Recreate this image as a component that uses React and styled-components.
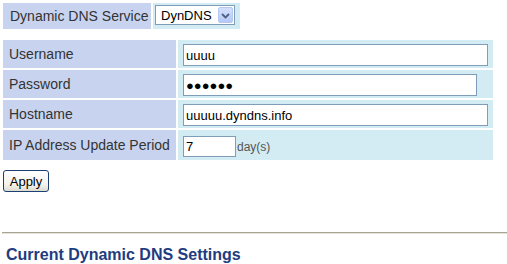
import React from "react";
import styled, { createGlobalStyle } from "styled-components";

const Global = createGlobalStyle`
  html, body { margin: 0; padding: 0; background: #fff; }
  body { font-family: "Liberation Sans", Arial, sans-serif; }
`;

const Page = styled.div`
  padding: 3px 0 0 3px;
  display: flex;
  flex-direction: column;
  align-items: flex-start;
`;

const Grid = styled.div`
  display: grid;
  grid-template-columns: ${(p) => p.$cols};
  grid-template-rows: ${(p) => p.$rows};
  gap: 2px;
  margin-top: ${(p) => p.$mt || 0}px;
`;

const LabelCell = styled.div`
  background: #c8d4ef;
  color: #333;
  font-size: 14px;
  display: flex;
  align-items: center;
  padding-left: ${(p) => p.$pl || 6}px;
  white-space: nowrap;
`;

const ValueCell = styled.div`
  background: #d3ebf2;
  display: flex;
  align-items: center;
  padding-left: ${(p) => p.$pl || 5}px;
  gap: 1px;
`;

const TextBox = styled.input`
  box-sizing: border-box;
  width: ${(p) => p.$w}px;
  height: ${(p) => p.$h || 22}px;
  border: 1px solid #7f9db9;
  background: #fff;
  font-family: "Liberation Sans", Arial, sans-serif;
  font-size: 13px;
  color: #000;
  padding: 0 2px;
  margin: 0;
  outline: none;
  margin-top: ${(p) => p.$mt || 0}px;
`;

const Unit = styled.span`
  font-size: 12px;
  color: #555;
  align-self: flex-end;
  margin-bottom: 6px;
`;

const SelectWrap = styled.div`
  box-sizing: border-box;
  width: 80px;
  height: 20px;
  border: 1px solid #7f9db9;
  background: #fff;
  display: flex;
  align-items: stretch;
  margin-top: -2px;
`;

const NativeSelect = styled.select`
  appearance: none;
  -webkit-appearance: none;
  border: none;
  background: transparent;
  font-family: "Liberation Sans", Arial, sans-serif;
  font-size: 13px;
  color: #000;
  padding: 0 0 0 5px;
  margin: 0;
  flex: 1;
  min-width: 0;
  outline: none;
`;

const ArrowBtn = styled.span`
  width: 15px;
  margin: 1px;
  border: 1px solid #b6c8f2;
  border-radius: 2px;
  background: linear-gradient(#d4e0fc, #b5c9f7);
  display: flex;
  align-items: center;
  justify-content: center;
  box-sizing: border-box;
  pointer-events: none;
`;

const ApplyButton = styled.button`
  box-sizing: border-box;
  width: 46px;
  height: 22px;
  margin-top: 10px;
  border: 1px solid #1c3f74;
  border-radius: 3px;
  background: linear-gradient(#ffffff, #f3f2ec 70%, #dedbcd);
  font-family: "Liberation Sans", Arial, sans-serif;
  font-size: 13px;
  color: #000;
  padding: 0;
`;

const Rule = styled.div`
  align-self: stretch;
  margin-top: 40px;
  margin-left: -1px;
  border-top: 1px solid #a6a494;
  border-bottom: 1px solid #e6e4d8;
`;

const Heading = styled.h3`
  margin: 12px 0 0 3px;
  font-size: 16px;
  line-height: 18px;
  font-weight: bold;
  color: #213c80;
`;

export default function App() {
  return (
    <>
      <Global />
      <Page>
        <Grid $cols="148px 87px" $rows="26px">
          <LabelCell $pl={7}>Dynamic DNS Service</LabelCell>
          <ValueCell $pl={2}>
            <SelectWrap>
              <NativeSelect defaultValue="DynDNS">
                <option>DynDNS</option>
                <option>TZO</option>
              </NativeSelect>
              <ArrowBtn>
                <svg width="9" height="7" viewBox="0 0 9 7">
                  <path d="M1 2 L4.5 5.5 L8 2" fill="none" stroke="#4d6185" strokeWidth="1.8" />
                </svg>
              </ArrowBtn>
            </SelectWrap>
          </ValueCell>
        </Grid>
        <Grid $cols="173px 315px" $rows="28px 28px 28px 30px" $mt={11}>
          <LabelCell>Username</LabelCell>
          <ValueCell>
            <TextBox $w={305} defaultValue="uuuu" $mt={2} />
          </ValueCell>
          <LabelCell>Password</LabelCell>
          <ValueCell>
            <TextBox $w={294} defaultValue="●●●●●●" $mt={2} />
          </ValueCell>
          <LabelCell>Hostname</LabelCell>
          <ValueCell>
            <TextBox $w={305} defaultValue="uuuuu.dyndns.info" $mt={2} />
          </ValueCell>
          <LabelCell>IP Address Update Period</LabelCell>
          <ValueCell>
            <TextBox $w={53} $h={21} defaultValue="7" $mt={3} />
            <Unit>day(s)</Unit>
          </ValueCell>
        </Grid>
        <ApplyButton>Apply</ApplyButton>
        <Rule />
        <Heading>Current Dynamic DNS Settings</Heading>
      </Page>
    </>
  );
}
